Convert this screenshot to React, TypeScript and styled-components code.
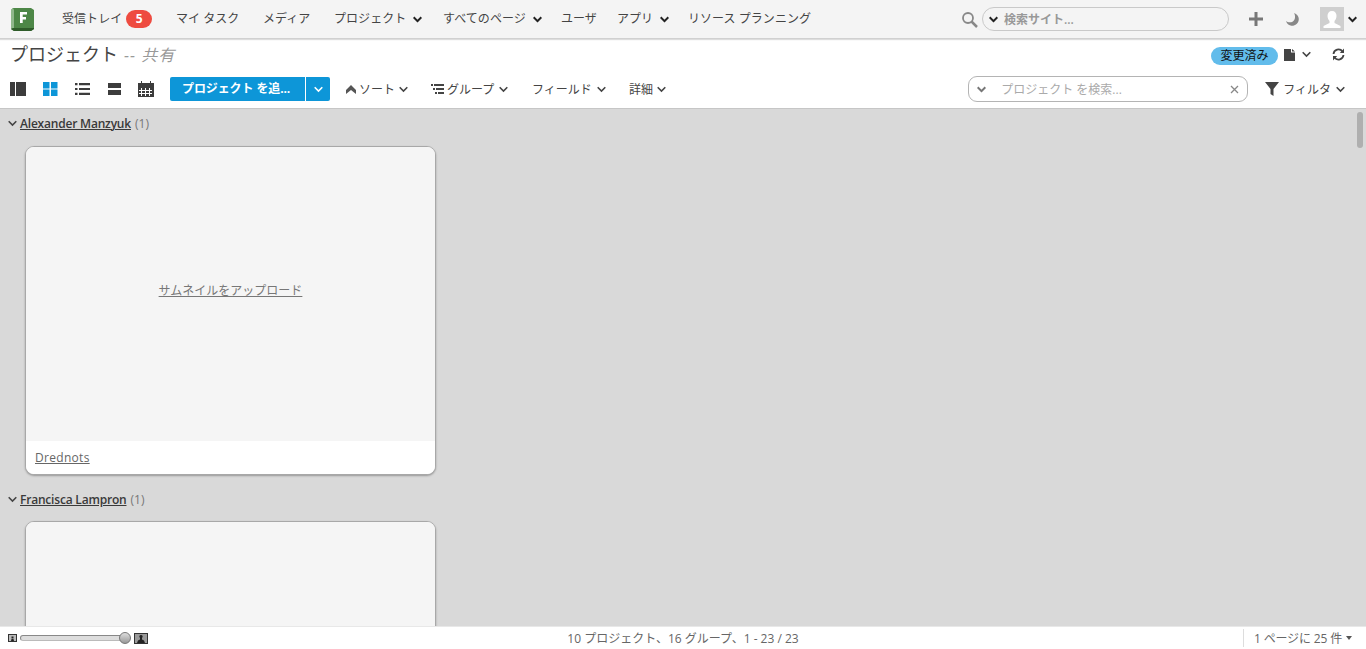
import React from "react";
import styled, { createGlobalStyle } from "styled-components";

const Global = createGlobalStyle`
  html, body { margin: 0; padding: 0; height: 100%; overflow: hidden; }
  body { font-family: "Open Sans", "Noto Sans CJK JP", sans-serif; color: #444; background: #fff; }
  #root { height: 100%; }
`;

const Page = styled.div`
  width: 1366px; height: 649px; display: flex; flex-direction: column; overflow: hidden;
`;
const TopBar = styled.header`
  height: 38px; flex: none; background: #f4f4f4; display: flex; align-items: center;
  border-bottom: 1px solid #d0d0d0; box-shadow: 0 1px 1px #ddd; position: relative; z-index: 2;
  padding-left: 11px; font-size: 12px; color: #444;
`;
const Logo = styled.svg`width: 23px; height: 23px; flex: none; margin-right: 28px; margin-top: 1px;`;
const NavItem = styled.span<{ $w: number }>`
  width: ${(p) => p.$w}px; flex: none; display: flex; align-items: center; white-space: nowrap; line-height: 36px;
  letter-spacing: 0.05px;
`;
const Badge = styled.span`
  width: 26px; height: 18px; border-radius: 9px; background: #ee4b40; color: #fff; font-weight: 700; font-size: 12px;
  line-height: 18px; text-align: center; margin-left: 4px;
`;
const Caret = styled.svg<{ $ml?: number; $c?: string; $sw?: number }>`
  width: 9px; height: 7px; flex: none; margin-left: ${(p) => p.$ml ?? 0}px;
  fill: none; stroke: ${(p) => p.$c ?? "#222"}; stroke-width: ${(p) => p.$sw ?? 2};
`;
const Right = styled.div`margin-left: auto; display: flex; align-items: center; padding-right: 9px;`;
const SiteSearch = styled.div`
  width: 247px; box-sizing: border-box; height: 24px; border: 1px solid #c9c9c9; border-radius: 12px; margin-left: 4px; display: flex; align-items: center;
  padding-left: 6px; color: #999; font-size: 12px; gap: 6px; margin-right: 20px; font-weight: 600;
`;
const Plus = styled.svg`width: 14px; height: 14px; fill: #777; flex: none;`;
const Moon = styled.svg`width: 14px; height: 14px; fill: #888; flex: none; margin-left: 22px;`;
const Avatar = styled.svg`width: 24px; height: 24px; flex: none; margin-left: 21px;`;

const TitleRow = styled.div`
  height: 31px; flex: none; display: flex; align-items: center; padding: 0 21px 0 10px;
`;
const Title = styled.div`font-size: 18px; color: #444; line-height: 30px;`;
const Sub = styled.span`font-size: 16px; color: #999; font-style: italic; margin-left: 6px; letter-spacing: 1px;`;
const Changed = styled.span`
  margin-left: auto; width: 67px; height: 18px; border-radius: 9px; background: #62bceb; color: #111; font-size: 12px; line-height: 18px;
  text-align: center; margin-top: 2px;
`;
const FileIcon = styled.svg`width: 11px; height: 12px; fill: #444; margin-left: 6px; flex: none;`;
const Refresh = styled.svg`width: 13px; height: 13px; fill: none; stroke: #444; stroke-width: 1.8; margin-left: 21px; flex: none;`;
const ToolRow = styled.div`
  height: 38px; flex: none; display: flex; align-items: center; padding: 0 21px 0 10px; border-bottom: 1px solid #c6c6c6; font-size: 12px; color: #444;
`;
const ViewIcon = styled.svg<{ $mr: number; $c?: string; $w?: number }>`
  width: ${(p) => p.$w ?? 16}px; height: 16px; flex: none; margin-right: ${(p) => p.$mr}px; fill: ${(p) => p.$c ?? "#3c3c3c"};
`;
const AddButton = styled.div`
  height: 24px; width: 135px; background: #0d96d8; color: #fff; font-weight: 700; font-size: 12px; line-height: 24px;
  border-radius: 2px 0 0 2px; flex: none; white-space: nowrap; padding-left: 12px; box-sizing: border-box; letter-spacing: -0.1px;
`;
const AddCaret = styled.div`
  height: 24px; width: 24px; margin-left: 1px; background: #0d96d8; border-radius: 0 2px 2px 0; display: flex; align-items: center; justify-content: center; flex: none;
`;
const ToolItem = styled.span<{ $w: number; $ml?: number }>`
  width: ${(p) => p.$w}px; margin-left: ${(p) => p.$ml ?? 0}px; flex: none; display: flex; align-items: center; white-space: nowrap; gap: 3px;
`;
const SearchBox = styled.div`
  margin-left: auto; width: 280px; box-sizing: border-box; height: 26px; border: 1px solid #b4b4b4; border-radius: 9px; display: flex; align-items: center;
  padding: 0 8px; font-size: 12px; color: #aaa; flex: none;
`;
const SearchText = styled.span`margin-left: 15px; flex: 1;`;
const Filter = styled.div`display: flex; align-items: center; margin-left: 17px; gap: 4px;`;

const Main = styled.main`
  flex: 1; background: #d9d9d9; overflow: hidden; position: relative; padding-left: 8px;
`;
const GroupHead = styled.div<{ $top: number }>`
  display: flex; align-items: center; height: 18px; margin-top: ${(p) => p.$top}px; font-size: 12px; color: #777;
`;
const GroupName = styled.a`
  color: #3a3a3a; font-weight: 600; text-decoration: underline; margin-left: 3px; margin-right: 4px; letter-spacing: -0.2px;
`;
const Card = styled.article<{ $top: number }>`
  width: 411px; box-sizing: border-box; margin: ${(p) => p.$top}px 0 0 17px; border-radius: 9px; overflow: hidden; background: #fff;
  border: 1px solid #a8a8a8; box-shadow: 0 1px 2px #999;
`;
const Thumb = styled.div`
  height: 294px; box-sizing: border-box; padding-bottom: 8px; background: #f5f5f5; display: flex; align-items: center; justify-content: center; font-size: 12px; color: #777;
  text-decoration: underline;
`;
const CardName = styled.div`
  height: 33px; background: #fff; font-size: 12px; color: #666; text-decoration: underline; padding-left: 9px; line-height: 33px; letter-spacing: 0.3px;
`;
const Scroll = styled.div`
  position: absolute; right: 3px; top: 3px; width: 6px; height: 36px; border-radius: 3px; background: #afafaf;
`;
const Footer = styled.footer`
  height: 22px; flex: none; background: #fff; border-top: 1px solid #e8e8e8; display: grid; grid-template-columns: 1fr auto 1fr;
  align-items: center; padding: 0 8px; font-size: 12px; color: #666;
`;
const Slider = styled.div`display: flex; align-items: center;`;
const Track = styled.div`
  width: 101px; height: 4px; box-sizing: content-box; margin-left: 3px; border: 1px solid #888; border-bottom-color: #bbb; border-radius: 3px; background: #ddd;
`;
const Knob = styled.div`
  width: 10px; height: 10px; border-radius: 50%; background: linear-gradient(#ddd, #999); border: 1px solid #777; margin-left: -4px; flex: none;
`;
const LargeIcon = styled.svg`width: 14px; height: 11px; margin-left: 3px; flex: none;`;
const SmallIcon = styled.svg`width: 9px; height: 8px; flex: none;`;
const PerPage = styled.div`
  justify-self: end; margin-right: 6px; border-left: 1px solid #ddd; padding-left: 10px; display: flex; align-items: center; gap: 4px; height: 18px; letter-spacing: -0.15px;
`;
const Tri = styled.span`width: 0; height: 0; border: 3px solid transparent; border-top: 4px solid #555; border-bottom: 0;`;

const Chev = ({ c, ml, sw }: { c?: string; ml?: number; sw?: number }) => (
  <Caret viewBox="0 0 9 7" $c={c} $ml={ml} $sw={sw}><path d="M.7 1.300L4.500 5.100 8.300 1.300" /></Caret>
);

export default function App() {
  return (
    <Page>
      <Global />
      <TopBar>
        <Logo viewBox="0 0 23 23">
          <path d="M2 0h18l3 2v19l-3 2H3l-3-2V2z" fill="#4d8747" />
          <path d="M0 2l2-2 1 2v18l-3 1z" fill="#8fb88b" />
          <path d="M2 20h21v1l-3 2H3l-3-2z" fill="#2f5c2a" />
          <path d="M9 4h7v2.500h-4.300v2.500H15v2.400h-3.300V15H9z" fill="#fff" />
        </Logo>
        <NavItem $w={114}>受信トレイ<Badge>5</Badge></NavItem>
        <NavItem $w={87}>マイ タスク</NavItem>
        <NavItem $w={71}>メディア</NavItem>
        <NavItem $w={109}>プロジェクト<Chev ml={7} /></NavItem>
        <NavItem $w={118}>すべてのページ<Chev ml={7} /></NavItem>
        <NavItem $w={56}>ユーザ</NavItem>
        <NavItem $w={71}>アプリ<Chev ml={7} /></NavItem>
        <NavItem $w={130}>リソース プランニング</NavItem>
        <Right>
          <svg width="17" height="17" viewBox="0 0 17 17" fill="none" stroke="#888" strokeWidth="1.800"><circle cx="7" cy="7" r="5" /><path d="M10.500 10.500L16 16" strokeWidth="2.500" /></svg>
          <SiteSearch><Chev />検索サイト...</SiteSearch>
          <Plus viewBox="0 0 14 14"><path d="M5.500 0h3v5.500H14v3H8.500V14h-3V8.500H0v-3h5.500z" /></Plus>
          <Moon viewBox="0 0 14 14"><path d="M9 1a6.500 6.500 0 1 1-8 8c2 2 7 2 8.500-1.500C10.500 5 10 2.500 9 1z" /></Moon>
          <Avatar viewBox="0 0 24 24">
            <rect width="24" height="24" fill="#cfcfcf" />
            <path d="M12 4c3 0 4.500 2 4.500 5 0 2-1 4-2 5v2l6 3v2H3.500v-2l6-3v-2c-1-1-2-3-2-5 0-3 1.500-5 4.500-5z" fill="#fff" />
          </Avatar>
          <Chev ml={4} />
        </Right>
      </TopBar>
      <TitleRow>
        <Title>プロジェクト<Sub>-- 共有</Sub></Title>
        <Changed>変更済み</Changed>
        <FileIcon viewBox="0 0 11 12"><path d="M0 0h7v3.500h4V12H0zM8 0l3 2.500H8z" /></FileIcon>
        <Chev c="#444" ml={7} sw={1.6} />
        <Refresh viewBox="0 0 13 13">
          <path d="M1.500 6A5 5 0 0 1 10.500 3.500" /><path d="M11.500 7A5 5 0 0 1 2.500 9.500" />
          <path d="M12 .5V5H7.800z" fill="#444" stroke="none" /><path d="M1 12.500V8h4.200z" fill="#444" stroke="none" />
        </Refresh>
      </TitleRow>
      <ToolRow>
        <ViewIcon $mr={17} viewBox="0 0 16 16"><path d="M0 1h5v14H0zM6 1h10v14H6z" /></ViewIcon>
        <ViewIcon $mr={17} $w={15} $c="#0d96d8" viewBox="0 0 15 16"><path d="M0 1h6.500v6.500H0zM8 1h6.500v6.500H8zM0 8.500h6.500V15H0zM8 8.500h6.500V15H8z" /></ViewIcon>
        <ViewIcon $mr={16} viewBox="0 0 16 16"><path d="M0 2h2.500v2.200H0zM4 2h11v2.200H4zM0 6.900h2.500v2.200H0zM4 6.900h11v2.200H4zM0 11.800h2.500V14H0zM4 11.800h11V14H4z" /></ViewIcon>
        <ViewIcon $mr={15} viewBox="0 0 16 16"><path d="M1 2h13v5H1zM1 9h13v5H1z" /></ViewIcon>
        <ViewIcon $mr={16} viewBox="0 0 16 16"><path fillRule="evenodd" d="M0 2h3V0h1v2h8V0h1v2h3v14H0zM3 7v2H1v1h2v2H1v1h2v2h1v-2h3v2h1v-2h3v2h1v-2h2v-1h-2V10h2V9h-2V7h-1v2H8V7H7v2H4V7zM4 10h3v2H4zM8 10h3v2H8z" /></ViewIcon>
        <AddButton>プロジェクト を追...</AddButton>
        <AddCaret><Chev c="#fff" sw={1.6} /></AddCaret>
        <ToolItem $w={85} $ml={16}>
          <svg width="10" height="9" viewBox="0 0 10 9" fill="#555"><path d="M5 0l5 5v4L5 5 0 9V5z" /></svg>ソート<Chev c="#444" ml={1} sw={1.6} />
        </ToolItem>
        <ToolItem $w={101}>
          <svg width="13" height="10" viewBox="0 0 13 10" fill="#444"><path d="M0 0h2v2H0zM3 0h10v2H3zM2 4h2v2H2zM5 4h8v2H5zM4 8h2v2H4zM7 8h6v2H7z" /></svg>グループ<Chev c="#444" ml={2} sw={1.6} />
        </ToolItem>
        <ToolItem $w={97}>フィールド<Chev c="#444" ml={2} sw={1.6} /></ToolItem>
        <ToolItem $w={50}>詳細<Chev c="#444" ml={1} sw={1.6} /></ToolItem>
        <SearchBox>
          <Chev c="#777" /><SearchText>プロジェクト を検索...</SearchText>
          <svg width="9" height="9" viewBox="0 0 9 9" stroke="#888" strokeWidth="1.300"><path d="M1 1l7 7M8 1L1 8" /></svg>
        </SearchBox>
        <Filter>
          <svg width="14" height="14" viewBox="0 0 14 14" fill="#444"><path d="M0 0h14L8.500 7v7l-3-2V7z" /></svg>フィルタ<Chev c="#444" ml={1} sw={1.6} />
        </Filter>
      </ToolRow>
      <Main>
        <Scroll />
        <GroupHead $top={5}><Chev c="#444" sw={1.6} /><GroupName>Alexander Manzyuk</GroupName>(1)</GroupHead>
        <Card $top={14}>
          <Thumb>サムネイルをアップロード</Thumb>
          <CardName>Drednots</CardName>
        </Card>
        <GroupHead $top={15}><Chev c="#444" sw={1.6} /><GroupName>Francisca Lampron</GroupName>(1)</GroupHead>
        <Card $top={13}>
          <Thumb />
        </Card>
      </Main>
      <Footer>
        <Slider>
          <SmallIcon viewBox="0 0 9 8"><rect width="9" height="8" fill="#333" /><rect x="1" y="1" width="7" height="6" fill="#bbb" /><path d="M3 7l.5-2h2L6 7zM3.500 2.500h2v2h-2z" fill="#222" /></SmallIcon>
          <Track /><Knob />
          <LargeIcon viewBox="0 0 14 11"><rect width="14" height="11" fill="#333" /><rect x="1" y="1" width="12" height="9" fill="#999" /><path d="M3 10l1-2.500 2-1V5c-1-1-1-3 1-3s2 2 1 3v1.500l2 1 1 2.500z" fill="#222" /></LargeIcon>
        </Slider>
        <div>10 プロジェクト、16 グループ、1 - 23 / 23</div>
        <PerPage>1 ページに 25 件<Tri /></PerPage>
      </Footer>
    </Page>
  );
}
